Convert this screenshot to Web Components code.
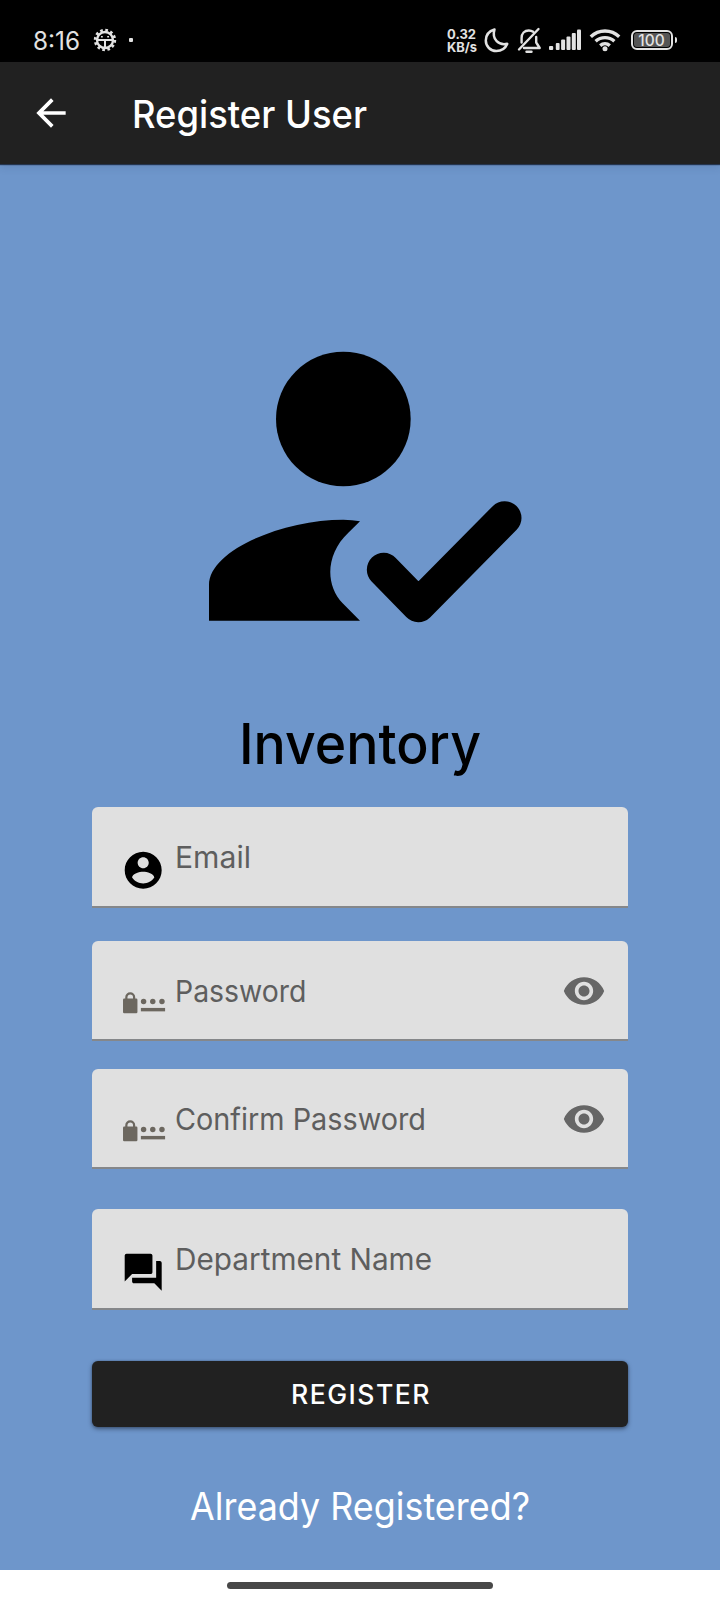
<!DOCTYPE html>
<html lang="en">
<head>
<meta charset="utf-8">
<title>Register User</title>
<style>
html, body { margin: 0; padding: 0; }
body { width: 720px; height: 1600px; overflow: hidden; background: #fff; font-family: Inter, "Noto Sans", sans-serif; }
</style>
</head>
<body>
<register-screen></register-screen>
<script>
const define = (name, html, setup) => {
  const template = document.createElement('template');
  template.innerHTML = html;
  customElements.define(name, class extends HTMLElement {
    constructor() {
      super();
      this.attachShadow({ mode: 'open' }).append(template.content.cloneNode(true));
    }
    connectedCallback() { if (setup) setup(this, this.shadowRoot); }
  });
};

/* A single line of text condensed or expanded to span a given width. */
define('fit-text', `
<style>
:host { display: block; white-space: nowrap; }
span { display: inline-block; transform-origin: 0 50%; }
</style><span><slot></slot></span>`, (el, root) => {
  const span = root.querySelector('span');
  const width = Number(el.getAttribute('width'));
  el.style.width = width + 'px';
  const natural = span.getBoundingClientRect().width;
  span.style.transform = 'scaleX(' + (width / natural).toFixed(4) + ')';
});

define('status-bar', `
<style>
:host { display: flex; box-sizing: border-box; height: 62px; padding: 18px 43px 0 33px; background: #000; color: #e2e2e2; align-items: center; }
svg { display: block; flex: none; }
.time { font-size: 25px; line-height: 46px; margin-top: 1px; }
.gear { margin-left: 13px; }
.dot { width: 4px; height: 4px; border-radius: 1px; background: #e2e2e2; margin-left: 12px; }
.right { display: flex; align-items: center; margin-left: auto; }
.speed { font-size: 13px; line-height: 13px; font-weight: 700; margin-right: 7px; padding-top: 1px; }
.battery { display: flex; align-items: center; margin-left: 10px; }
.cell { box-sizing: border-box; width: 42px; height: 20px; border: 2px solid #e2e2e2; border-radius: 6px; padding: 1px; display: flex; }
.level { flex: 1; background: #555; border-radius: 3px; display: flex; justify-content: center; font-size: 15.500px; line-height: 15px; font-weight: 500; }
.nub { width: 2.500px; height: 6px; border-radius: 0 2px 2px 0; background: #e2e2e2; margin-left: 2px; }
</style>
<fit-text class="time" width="47">8:16</fit-text>
<svg class="gear" width="24" height="24" viewBox="0 0 24 24" fill="none" stroke="#e2e2e2">
  <circle cx="12" cy="12" r="9.700" stroke-width="3" stroke-dasharray="2.600 2.478"/>
  <circle cx="12" cy="12" r="8" stroke-width="2.300"/>
  <path d="M4 12h16M12 12v8" stroke-width="2"/>
  <path d="M8 8.800h1.800M14.200 8.800H16" stroke-width="1.400"/>
</svg>
<span class="dot"></span>
<div class="right">
  <div class="speed"><fit-text width="29">0.32</fit-text><fit-text width="30">KB/s</fit-text></div>
  <svg width="25" height="26" viewBox="0 0 25 26" fill="none" stroke="#e2e2e2" stroke-width="2.500" stroke-linejoin="round">
    <path d="M10.500 2.500C5.500 4 1.800 8 1.800 13.500C1.800 19.500 6.500 24 12.300 24C17.500 24 21.500 21.200 23.300 16.800C15 18.800 7.500 12.500 10.500 2.500Z"/>
  </svg>
  <svg style="margin-left:8px" width="25" height="27" viewBox="0 0 25 27" fill="none" stroke="#e2e2e2" stroke-width="2.400" stroke-linecap="round" stroke-linejoin="round">
    <path d="M4.600 15.500V11C4.600 6.500 7.500 3.500 11.800 3.500C13.500 3.500 15 4 16.200 4.800M19.200 10V15.500L22.700 21H7"/>
    <path d="M21.500 2L2 22.500"/>
    <path d="M9.500 24.700h5" stroke-width="2.400"/>
  </svg>
  <svg style="margin-left:7px" width="33" height="22" viewBox="0 0 33 22" fill="#e2e2e2">
    <rect x="0" y="17" width="4.200" height="4" rx="1"/><rect x="6.800" y="14" width="3.800" height="7" rx="1"/>
    <rect x="12.100" y="10.500" width="4" height="10.500" rx="1"/><rect x="17.500" y="7.500" width="4" height="13.500" rx="1"/>
    <rect x="22.800" y="4" width="4" height="17" rx="1"/><rect x="28" y="0.500" width="4" height="20.500" rx="1"/>
  </svg>
  <svg style="margin-left:7px" width="32" height="24" viewBox="0 0 32 24" fill="none" stroke="#e2e2e2" stroke-width="3.400">
    <path d="M1.800 8.700C9.800 1 22.200 1 30.200 8.700"/>
    <path d="M6.600 13.300C12 8.400 20 8.400 25.400 13.300"/>
    <path d="M11.200 17.600C14 15.200 18 15.200 20.800 17.600"/>
    <circle cx="16" cy="20.800" r="2.500" fill="#e2e2e2" stroke="none"/>
  </svg>
  <div class="battery"><div class="cell"><div class="level">100</div></div><span class="nub"></span></div>
</div>`);

define('app-bar', `
<style>
:host { display: flex; align-items: center; box-sizing: border-box; height: 102px; padding-left: 29px; background: #212121; color: #fff; font-size: 37.500px; line-height: 102px; font-weight: 450; box-shadow: 0 1px 1px rgba(20,30,50,.8), 0 3px 8px rgba(40,50,80,.15); position: relative; }
svg { display: block; margin-right: 58.500px; }
fit-text { padding-top: 3px; }
</style>
<svg width="44" height="44" viewBox="0 0 24 24" fill="#fff"><path d="M20 11H7.830l5.590-5.590L12 4l-8 8 8 8 1.410-1.410L7.830 13H20v-2z"/></svg>
<fit-text width="235"><slot></slot></fit-text>`);

define('hero-user', `
<style>:host { display: block; width: 350px; height: 310px; } svg { display: block; }</style>
<svg width="350" height="310" viewBox="0 0 1050 930">
  <circle cx="460" cy="267" r="202"/>
  <path d="M57 872V765C57 660 280 569 460 569Q487 569 510 574L475 608C407 672 405 765 458 820L510 872Z"/>
  <path d="M581 719L685 826L944 564" fill="none" stroke="#000" stroke-width="101" stroke-linecap="round" stroke-linejoin="round"/>
</svg>`);

const ICONS = {
  account: '<svg viewBox="0 0 24 24" fill="#000"><path d="M12 2C6.480 2 2 6.480 2 12s4.480 10 10 10 10-4.480 10-10S17.520 2 12 2zm0 3c1.660 0 3 1.340 3 3s-1.340 3-3 3-3-1.340-3-3 1.340-3 3-3zm0 14.200c-2.500 0-4.710-1.280-6-3.220.030-1.990 4-3.080 6-3.080 1.990 0 5.970 1.090 6 3.080-1.290 1.940-3.500 3.220-6 3.220z"/></svg>',
  forum: '<svg viewBox="0 0 24 24" fill="#000"><path d="M21 6h-2v9H6v2c0 .55.45 1 1 1h11l4 4V7c0-.55-.45-1-1-1zm-4 6V3c0-.55-.45-1-1-1H3c-.55 0-1 .45-1 1v14l4-4h10c.55 0 1-.45 1-1z"/></svg>',
  password: '<svg viewBox="0 0 44 44" fill="#6c675f"><rect x="2" y="16.300" width="14.300" height="14.700" rx="1.200"/><path d="M5.300 17.500V15.200a3.850 3.850 0 0 1 7.700 0V17.500" fill="none" stroke="#6c675f" stroke-width="2.200"/><circle cx="22.400" cy="19.300" r="2.700"/><circle cx="31.500" cy="19.300" r="2.700"/><circle cx="40.600" cy="19.300" r="2.700"/><rect x="19.700" y="25.700" width="24" height="3.400"/></svg>'
};

define('text-field', `
<style>
:host { display: flex; box-sizing: border-box; width: 536px; height: 100px; padding-left: 29px; padding-right: 22px; background: #e0e0e0; border-bottom: 2px solid #85878a; border-radius: 6px 6px 0 0; color: #5e5e5e; font-size: 30px; line-height: 100px; }
:host([tall]) { height: 101px; }
.lead { width: 44.400px; height: 44.400px; margin: 41.400px 9.300px 0 0; flex: none; }
.lead svg { display: block; width: 100%; height: 100%; overflow: visible; }
.eye { display: none; width: 44px; height: 44px; margin: 27.500px 0 0 auto; }
:host([reveal]) .eye { display: block; }
</style>
<div class="lead"></div>
<fit-text><slot></slot></fit-text>
<svg class="eye" viewBox="0 0 24 24" fill="#666"><path d="M12 4.500C7 4.500 2.730 7.610 1 12c1.730 4.390 6 7.500 11 7.500s9.270-3.110 11-7.500c-1.730-4.390-6-7.500-11-7.500zM12 17c-2.760 0-5-2.240-5-5s2.240-5 5-5 5 2.240 5 5-2.240 5-5 5zm0-8c-1.660 0-3 1.340-3 3s1.340 3 3 3 3-1.340 3-3-1.340-3-3-3z"/></svg>`,
(el, root) => {
  root.querySelector('.lead').innerHTML = ICONS[el.getAttribute('icon')];
  const label = document.createElement('fit-text');
  label.setAttribute('width', el.getAttribute('label-width'));
  label.textContent = el.getAttribute('label');
  root.querySelector('fit-text').replaceWith(label);
});

define('raised-button', `
<style>
:host { display: flex; justify-content: center; box-sizing: border-box; width: 536px; height: 66px; background: #212121; border-radius: 6px; color: #fff; font-size: 27px; letter-spacing: 1.500px; line-height: 68px; font-weight: 450; box-shadow: 0 2px 4px rgba(30,40,60,.55), 0 0 2px rgba(30,40,60,.4); }
</style><slot></slot>`);

define('nav-pill', `
<style>
:host { display: flex; justify-content: center; box-sizing: border-box; height: 30px; padding-top: 12px; padding-right: 1px; background: #fff; }
span { width: 266px; height: 7px; border-radius: 4px; background: #484848; }
</style><span></span>`);

define('register-screen', `
<style>
:host { display: flex; flex-direction: column; width: 720px; height: 1600px; background: #6e96cb; }
main { flex: 1; display: flex; flex-direction: column; align-items: center; padding-top: 166px; }
hero-user { margin-left: 10px; }
.name { font-size: 56px; line-height: 80px; color: #000; font-weight: 450; margin: 64px 0 23px 0; }
.pw { margin-top: 33px; }
.confirm { margin-top: 28px; }
.dept { margin-top: 40px; }
raised-button { margin-top: 51px; }
raised-button fit-text { margin-left: 1px; }
.link { color: #fff; font-size: 37.500px; line-height: 60px; margin-top: 50px; }
</style>
<status-bar></status-bar>
<app-bar>Register User</app-bar>
<main>
  <hero-user></hero-user>
  <fit-text class="name" width="242">Inventory</fit-text>
  <text-field tall icon="account" label="Email" label-width="76"></text-field>
  <text-field class="pw" icon="password" label="Password" label-width="131.500" reveal></text-field>
  <text-field class="confirm" icon="password" label="Confirm Password" label-width="251" reveal></text-field>
  <text-field tall class="dept" icon="forum" label="Department Name" label-width="257"></text-field>
  <raised-button><fit-text width="140">REGISTER</fit-text></raised-button>
  <fit-text class="link" width="340">Already Registered?</fit-text>
</main>
<nav-pill></nav-pill>`);
</script>
</body>
</html>
